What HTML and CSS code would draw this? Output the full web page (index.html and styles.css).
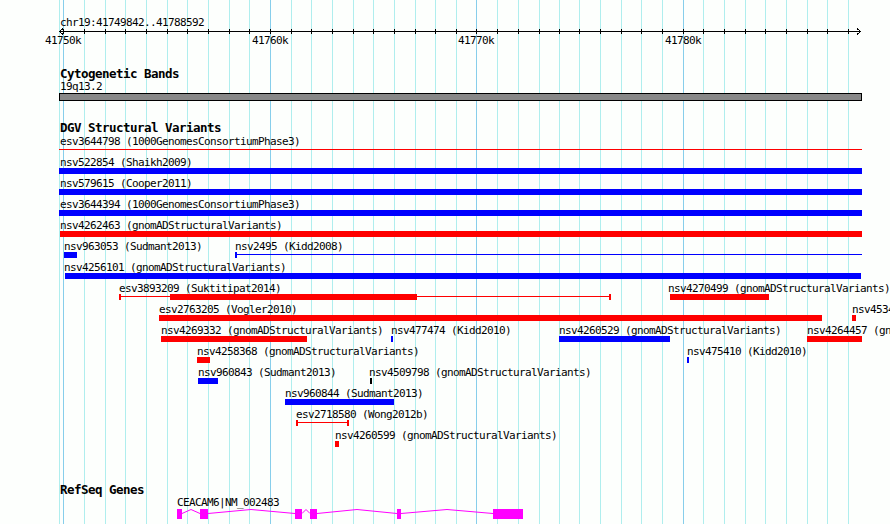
FILE: index.html
```html
<html>
<head>
<title>chr19:41749842..41788592</title>
<link rel="stylesheet" href="styles.css">
</head>

<body>
<div id="panel">

<!-- kb grid, drawn under the tracks -->
<svg class="grid" width="890" height="524">
  <path class="minor" d="M59.5 0V524M84.5 0V524M105.5 0V524M125.5 0V524M146.5 0V524M167.5 0V524M187.5 0V524M208.5 0V524M229.5 0V524M249.5 0V524
    M291.5 0V524M311.5 0V524M332.5 0V524M353.5 0V524M373.5 0V524M394.5 0V524M415.5 0V524M435.5 0V524M456.5 0V524
    M497.5 0V524M518.5 0V524M539.5 0V524M559.5 0V524M579.5 0V524M600.5 0V524M621.5 0V524M641.5 0V524M662.5 0V524
    M703.5 0V524M724.5 0V524M745.5 0V524M765.5 0V524M786.5 0V524M807.5 0V524M827.5 0V524M848.5 0V524"/>
  <path class="major" d="M63.5 0V524M270.5 0V524M476.5 0V524M683.5 0V524"/>
</svg>

<div id="ruler">
  <div class="locus">chr19:41749842..41788592</div>
  <svg class="scale" width="890" height="7">
    <path d="M59 3.5H861"/>
    <path d="M63.5 1V6M84.5 1V6M105.5 1V6M125.5 1V6M146.5 1V6M167.5 1V6M187.5 1V6M208.5 1V6M229.5 1V6M249.5 1V6
      M270.5 1V6M291.5 1V6M311.5 1V6M332.5 1V6M353.5 1V6M373.5 1V6M394.5 1V6M415.5 1V6M435.5 1V6M456.5 1V6
      M476.5 1V6M497.5 1V6M518.5 1V6M539.5 1V6M559.5 1V6M579.5 1V6M600.5 1V6M621.5 1V6M641.5 1V6M662.5 1V6
      M683.5 1V6M703.5 1V6M724.5 1V6M745.5 1V6M765.5 1V6M786.5 1V6M807.5 1V6M827.5 1V6M848.5 1V6"/>
    <polyline points="63,0.5 59.5,3.5 63,6.5"/>
    <polyline points="857,0.5 860.5,3.5 857,6.5"/>
  </svg>
  <div class="ticks">
    <span style="left:63px">41750k</span>
    <span style="left:270px">41760k</span>
    <span style="left:476px">41770k</span>
    <span style="left:683px">41780k</span>
  </div>
</div>

<div class="track" id="cyto">
  <div class="tname">Cytogenetic Bands</div>
  <div class="label">19q13.2</div>
  <div class="band"></div>
</div>

<div class="track" id="dgv">
  <div class="tname">DGV Structural Variants</div>
  <div class="rows">
    <div class="row">
      <span class="lbl" style="left:60px">esv3644798 (1000GenomesConsortiumPhase3)</span>
      <span class="line red" style="left:59px;width:803px"></span>
    </div>
    <div class="row">
      <span class="lbl" style="left:60px">nsv522854 (Shaikh2009)</span>
      <span class="bar blue" style="left:59px;width:803px"></span>
    </div>
    <div class="row">
      <span class="lbl" style="left:60px">nsv579615 (Cooper2011)</span>
      <span class="bar blue" style="left:59px;width:803px"></span>
    </div>
    <div class="row">
      <span class="lbl" style="left:60px">esv3644394 (1000GenomesConsortiumPhase3)</span>
      <span class="bar blue" style="left:59px;width:803px"></span>
    </div>
    <div class="row">
      <span class="lbl" style="left:60px">nsv4262463 (gnomADStructuralVariants)</span>
      <span class="bar red" style="left:60px;width:802px"></span>
    </div>
    <div class="row">
      <span class="lbl" style="left:64px">nsv963053 (Sudmant2013)</span>
      <span class="bar blue" style="left:64px;width:13px"></span>
      <span class="lbl" style="left:235px">nsv2495 (Kidd2008)</span>
      <span class="tick blue" style="left:235px"></span>
      <span class="line blue" style="left:235px;width:627px"></span>
    </div>
    <div class="row">
      <span class="lbl" style="left:64px">nsv4256101 (gnomADStructuralVariants)</span>
      <span class="bar blue" style="left:65px;width:796px"></span>
    </div>
    <div class="row">
      <span class="lbl" style="left:119px">esv3893209 (Suktitipat2014)</span>
      <span class="tick red" style="left:119px"></span>
      <span class="line red" style="left:119px;width:492px"></span>
      <span class="bar red" style="left:170px;width:247px"></span>
      <span class="tick red" style="left:609px"></span>
      <span class="lbl" style="left:668px">nsv4270499 (gnomADStructuralVariants)</span>
      <span class="bar red" style="left:670px;width:99px"></span>
    </div>
    <div class="row">
      <span class="lbl" style="left:159px">esv2763205 (Vogler2010)</span>
      <span class="bar red" style="left:159px;width:663px"></span>
      <span class="lbl" style="left:852px">nsv4534</span>
      <span class="bar red" style="left:852px;width:4px"></span>
    </div>
    <div class="row">
      <span class="lbl" style="left:161px">nsv4269332 (gnomADStructuralVariants)</span>
      <span class="bar red" style="left:161px;width:146px"></span>
      <span class="lbl" style="left:391px">nsv477474 (Kidd2010)</span>
      <span class="bar blue" style="left:391px;width:2px"></span>
      <span class="lbl" style="left:559px">nsv4260529 (gnomADStructuralVariants)</span>
      <span class="bar blue" style="left:559px;width:111px"></span>
      <span class="lbl" style="left:807px">nsv4264457 (gnomADStructuralVariants)</span>
      <span class="bar red" style="left:807px;width:55px"></span>
    </div>
    <div class="row">
      <span class="lbl" style="left:197px">nsv4258368 (gnomADStructuralVariants)</span>
      <span class="bar red" style="left:197px;width:13px"></span>
      <span class="lbl" style="left:687px">nsv475410 (Kidd2010)</span>
      <span class="bar blue" style="left:687px;width:2px"></span>
    </div>
    <div class="row">
      <span class="lbl" style="left:198px">nsv960843 (Sudmant2013)</span>
      <span class="bar blue" style="left:198px;width:20px"></span>
      <span class="lbl" style="left:369px">nsv4509798 (gnomADStructuralVariants)</span>
      <span class="bar black" style="left:370px;width:2px"></span>
    </div>
    <div class="row">
      <span class="lbl" style="left:285px">nsv960844 (Sudmant2013)</span>
      <span class="bar blue" style="left:285px;width:109px"></span>
    </div>
    <div class="row">
      <span class="lbl" style="left:296px">esv2718580 (Wong2012b)</span>
      <span class="tick red" style="left:296px"></span>
      <span class="line red" style="left:296px;width:53px"></span>
      <span class="tick red" style="left:347px"></span>
    </div>
    <div class="row">
      <span class="lbl" style="left:335px">nsv4260599 (gnomADStructuralVariants)</span>
      <span class="bar red" style="left:335px;width:4px"></span>
    </div>
  </div>
</div>

<div class="track" id="refseq">
  <div class="tname">RefSeq Genes</div>
  <div class="generow">
    <span class="lbl" style="left:177px">CEACAM6|NM_002483</span>
    <svg class="gene" width="890" height="10">
      <rect x="177" y="0" width="5" height="10"/>
      <rect x="200" y="0" width="8" height="10"/>
      <rect x="295" y="0" width="7" height="10"/>
      <rect x="310" y="0" width="7" height="10"/>
      <rect x="397" y="0" width="4" height="10"/>
      <rect x="493" y="0" width="30" height="10"/>
      <polyline points="182,4.5 191,0.5 200,4.5"/>
      <polyline points="208,4.5 251,0.5 295,4.5"/>
      <polyline points="302,4.5 306,0.5 310,4.5"/>
      <polyline points="317,4.5 357,0.5 397,4.5"/>
      <polyline points="401,4.5 447,0.5 493,4.5"/>
    </svg>
  </div>
</div>

</div>
</body>
</html>
```

FILE: styles.css
```css
body		{margin:0; background:#fdfffd;}
#panel		{position:relative; z-index:0; width:890px; height:524px; overflow:hidden;
			 font-family:"DejaVu Sans Mono","Liberation Mono",monospace; font-size:11px; letter-spacing:-0.62px; color:#000;}

.grid		{position:absolute; top:0; left:0; z-index:-1;}
.grid path	{fill:none; stroke-width:1;}
.grid .minor	{stroke:#afeeee;}
.grid .major	{stroke:#87ceeb;}

#ruler		{padding-top:17px;}
.locus, .label	{margin-left:60px; height:11px; line-height:11px; white-space:nowrap;}
.scale		{display:block;}
.scale path, .scale polyline {fill:none; stroke:#000; stroke-width:1; shape-rendering:crispEdges;}
.ticks		{position:relative; height:11px; line-height:11px;}
.ticks span	{position:absolute; top:0; transform:translateX(-50%);}

.tname		{margin-left:60px; height:12px; line-height:12px; font-size:12.5px; letter-spacing:-0.53px; font-weight:bold; white-space:nowrap;}

#cyto		{margin-top:22px;}
#cyto .label	{margin-top:1px;}
.band		{margin:1px 0 0 59px; width:803px; height:8px; box-sizing:border-box;
			 border:1px solid #000; background:#888;}

#dgv		{margin-top:21px;}
.rows		{margin-top:2px;}
.row		{position:relative; height:21px;}
.lbl		{position:absolute; top:0; line-height:11px; white-space:nowrap;}
.bar		{position:absolute; top:11px; height:6px;}
.line		{position:absolute; top:13px; height:1px;}
.tick		{position:absolute; top:11px; width:2px; height:6px;}
.red		{background:#f00;}
.blue		{background:#00f;}
.black		{background:#000;}

#refseq		{margin-top:33px;}
.generow	{position:relative; margin-top:1px; height:22px;}
.gene		{position:absolute; top:12px; left:0;}
.gene rect	{fill:#f0f;}
.gene polyline	{fill:none; stroke:#f0f; stroke-width:1;}
```
